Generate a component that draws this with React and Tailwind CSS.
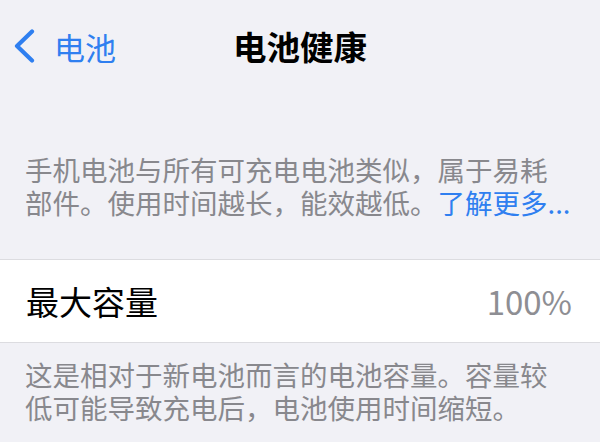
import React from 'react';

const font = { fontFamily: '"Noto Sans CJK SC", "Noto Sans", sans-serif' };

const BackChevron = () => (
  <svg width="24" height="34" viewBox="0 0 24 34" fill="none" className="shrink-0">
    <polyline
      points="19,2.5 4,17 19,31.5"
      stroke="#2f7ff0"
      strokeWidth="4.2"
      strokeLinecap="round"
      strokeLinejoin="round"
    />
  </svg>
);

const App = () => {
  return (
    <div className="w-[600px] h-[442px] overflow-hidden bg-[#f1f1f6]" style={font}>
      {/* nav bar */}
      <div className="grid grid-cols-[1fr_auto_1fr] items-center h-[92px]">
        <div className="flex items-center pl-[13px] gap-[17px] text-[#2f7ff0] text-[31px] leading-none">
          <BackChevron />
          <span>电池</span>
        </div>
        <h1 className="text-[33.5px] font-bold text-black leading-none">电池健康</h1>
        <div />
      </div>

      {/* description */}
      <div className="flex flex-col gap-[5px] pt-[63px] pb-[43px] pl-[25px] text-[27.5px] leading-[28px] text-[#88888d]">
        <p className="whitespace-nowrap">手机电池与所有可充电电池类似，属于易耗</p>
        <p className="whitespace-nowrap">
          部件。使用时间越长，能效越低。<span className="text-[#2f7ff0]">了解更多...</span>
        </p>
      </div>

      {/* max capacity row */}
      <div className="flex items-center justify-between h-[84px] bg-white border-y border-[#dcdce0] pl-[26px] pr-[28px]">
        <span className="text-[33px] text-black leading-none">最大容量</span>
        <span className="text-[33px] text-[#8e8e93] leading-none">100%</span>
      </div>

      {/* footer note */}
      <div className="flex flex-col gap-[5px] pt-[17px] pl-[25px] text-[27.5px] leading-[28px] text-[#88888d]">
        <p className="whitespace-nowrap">这是相对于新电池而言的电池容量。容量较</p>
        <p className="whitespace-nowrap">低可能导致充电后，电池使用时间缩短。</p>
      </div>
    </div>
  );
};

export default App;
